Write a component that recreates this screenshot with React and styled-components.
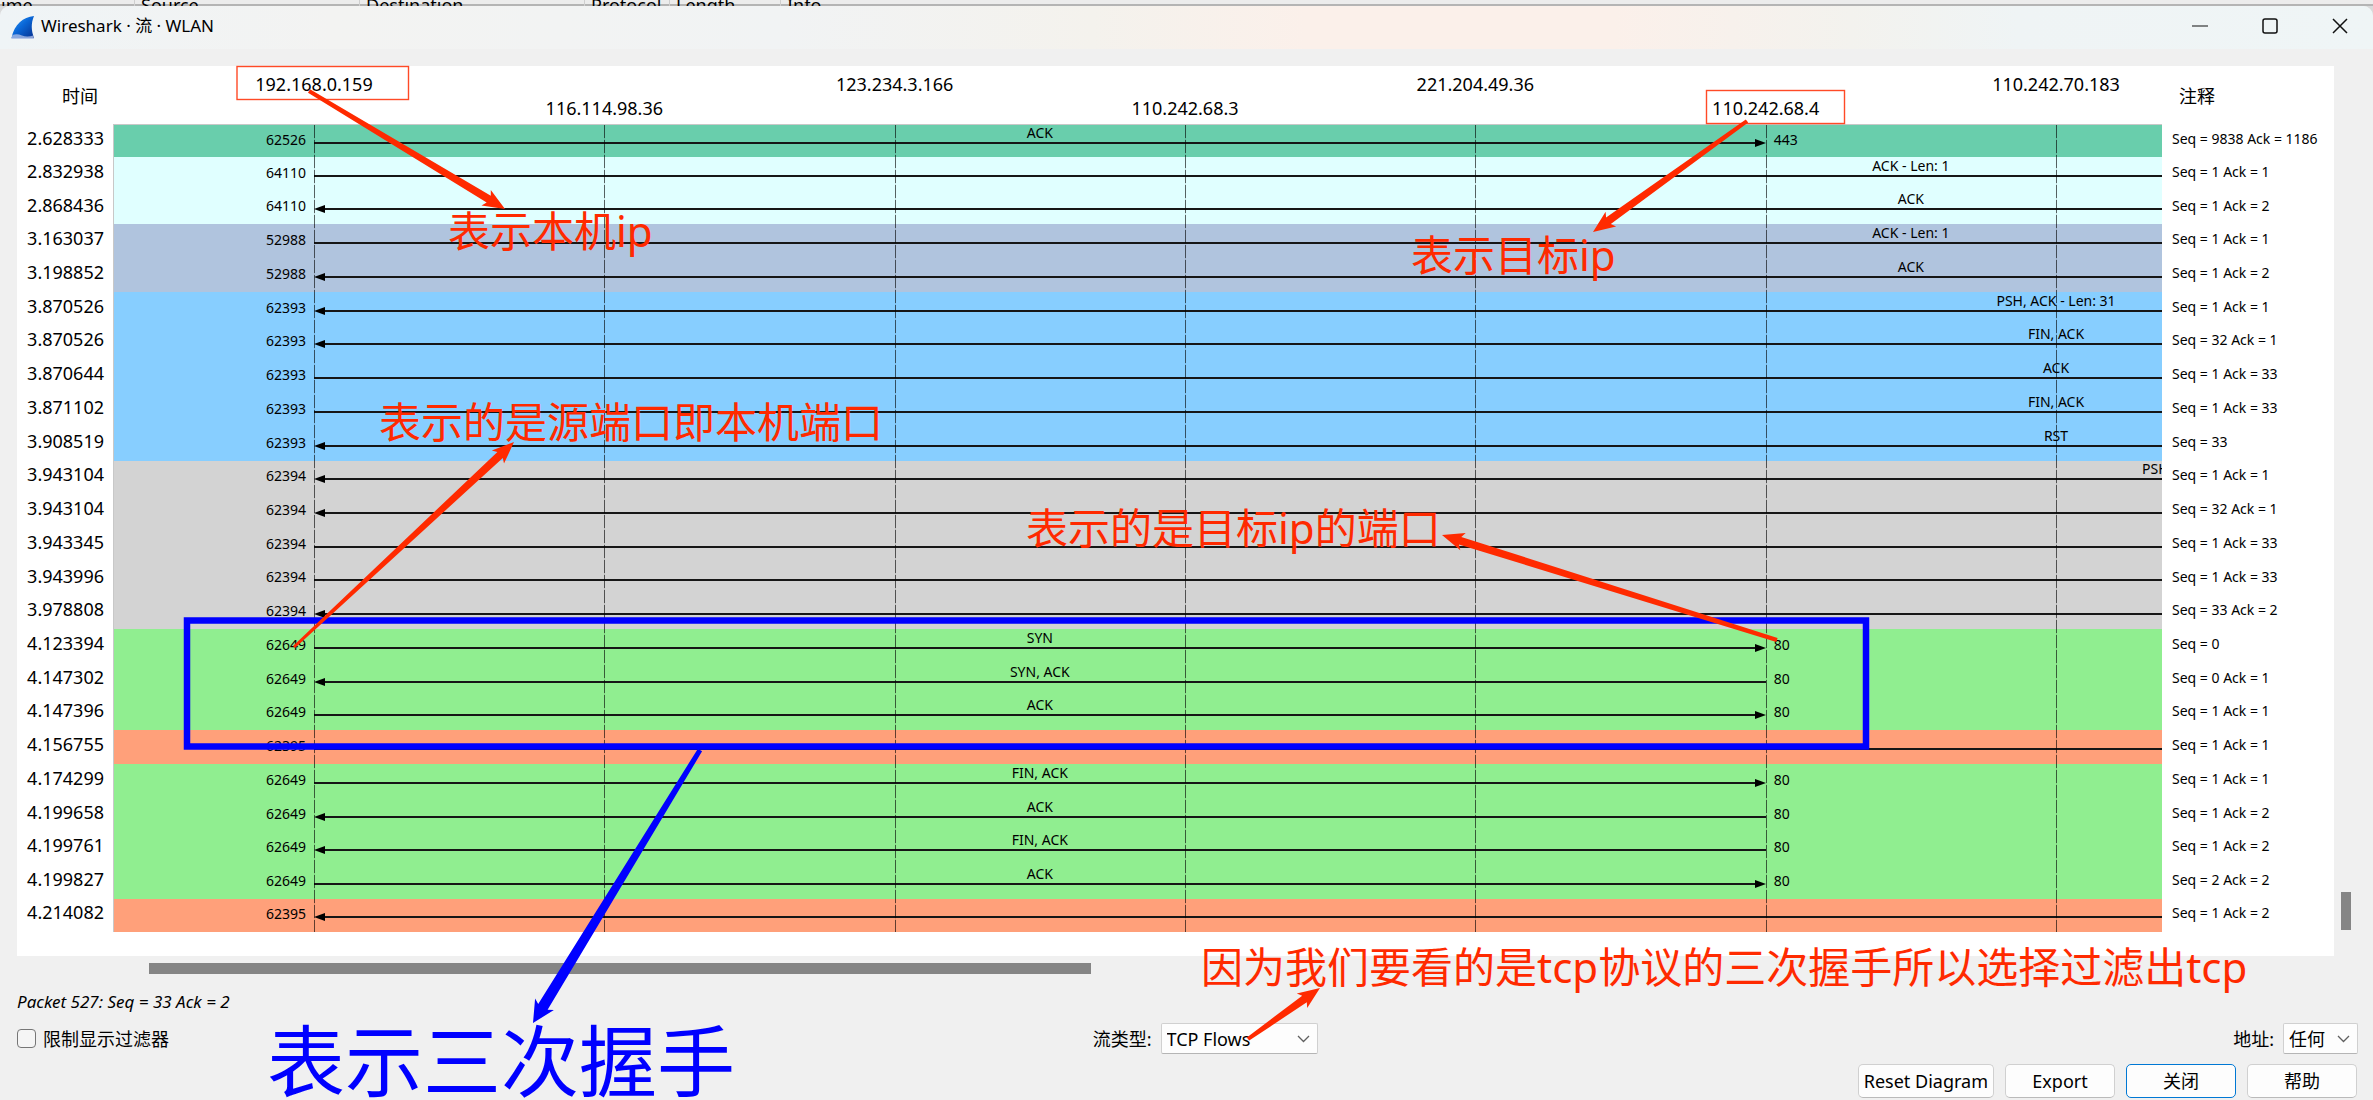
import React from "react";
import styled, { createGlobalStyle, css } from "styled-components";

const GlobalStyle = createGlobalStyle`
  *, *::before, *::after { box-sizing: border-box; }
  body { margin: 0; background: #f0f0f0; }
  body, button, select, input {
    font-family: "Noto Sans", "Noto Sans CJK SC", sans-serif;
    font-size: 18px;
    color: #000;
  }
`;

const RED = "#ff2a00";
const BLUE = "#0000ff";

/* Lifelines sit on the inner edges of this grid, shared by header, rows and overlay. */
const lifelineGrid = css`
  display: grid;
  grid-template-columns: 201px repeat(6, minmax(0, 1fr)) 106px;
`;
const panelGrid = css`
  display: grid;
  grid-template-columns: 96px minmax(0, 1fr) 172px;
`;

const Page = styled.div`
  position: relative;
  display: flex;
  flex-direction: column;
  min-height: 100vh;
  overflow: hidden;
  background: #d9dadb;
`;

const BackWindow = styled.div`
  display: grid;
  grid-template-columns: 134px 225px 225px 85px 111px 1fr;
  height: 6px;
  overflow: hidden;
  background: linear-gradient(#ececec 4px, #b4b4b4 4px);
`;
const BackColumn = styled.span`
  height: 6px;
  padding-left: ${(p) => (p.$first ? 1 : 6)}px;
  border-left: ${(p) => (p.$first ? "0" : "1px solid #cfcfcf")};
  line-height: 10px;
  overflow: hidden;
`;

const Dialog = styled.main`
  display: flex;
  flex: 1;
  flex-direction: column;
  padding-bottom: 2px;
  border-radius: 10px 10px 0 0;
  overflow: hidden;
  background: #f0f0f0;
`;

const TitleBar = styled.header`
  display: flex;
  align-items: center;
  height: 43px;
  padding: 0 17px 0 11px;
  background: linear-gradient(90deg, #eff4f6 0%, #f3f3f2 14%, #f1f3f4 33%, #f4f2ed 46%, #fbf0ea 55%, #fbf0ea 68%, #f3f2ee 78%, #eff4f5 85%, #eff5f6 100%);
`;
const Title = styled.h1`
  flex: 1;
  margin: 0 0 3px 7px;
  font-size: 17px;
  font-weight: 400;
  line-height: 24px;
`;
const WindowButtons = styled.div`
  display: flex;
  gap: 38px;
  margin-bottom: 3px;
`;
const WindowButton = styled.button`
  display: flex;
  align-items: center;
  justify-content: center;
  width: 32px;
  height: 32px;
  padding: 0;
  border: 0;
  background: none;
`;

const Workspace = styled.section`
  display: flex;
  flex: 1;
  padding: 17px 0 0 17px;
`;
const Panel = styled.div`
  position: relative;
  display: flex;
  flex: 1;
  flex-direction: column;
  padding-bottom: 24px;
  background: #fff;
`;
const Gutter = styled.div`
  display: flex;
  flex-direction: column;
  justify-content: flex-end;
  width: 39px;
  padding: 0 0 26px 7px;
`;
const VerticalThumb = styled.div`
  width: 10px;
  height: 38px;
  background: #858585;
`;
const HorizontalTrack = styled.div`
  display: grid;
  grid-template-columns: 132fr 942fr 1243fr;
  margin: 7px 39px 0 17px;
`;
const HorizontalThumb = styled.div`
  grid-column: 2;
  height: 11px;
  background: #858585;
`;

const FlowTable = styled.table`
  display: flex;
  flex: 1;
  flex-direction: column;
`;
const Head = styled.thead`
  display: block;
`;
const HeadRow = styled.tr`
  ${panelGrid}
  height: 59px;
`;
const HeadCell = styled.th`
  padding: 18px 15px 0 17px;
  font-weight: 400;
  line-height: 24px;
  text-align: ${(p) => p.$align};
`;
const HostScale = styled.th`
  ${lifelineGrid}
  padding: 6px 0 0;
  border-bottom: 1px solid #c8c8c8;
  font-weight: 400;
`;
const Host = styled.span`
  grid-row: 1;
  grid-column: ${(p) => p.$line + 2};
  display: flex;
  justify-content: center;
  width: 0;
  padding-top: ${(p) => (p.$line % 2 ? 24 : 0)}px;
  line-height: 24px;
  white-space: nowrap;
`;

const Body = styled.tbody`
  display: grid;
  flex: 1;
  grid-template-rows: 32px repeat(22, minmax(24px, 1fr)) 33px;
`;
const Row = styled.tr`
  ${panelGrid}
`;
const Time = styled.td`
  display: flex;
  align-items: center;
  justify-content: flex-end;
  padding: 0 9px 6px 0;
  line-height: 24px;
`;
const Comment = styled.td`
  display: flex;
  align-items: center;
  padding: 0 0 4px 10px;
  font-size: 14px;
  line-height: 20px;
  white-space: nowrap;
`;
const Lane = styled.td`
  ${lifelineGrid}
  align-items: end;
  padding: 0;
  box-shadow: inset 1px 0 #c8c8c8;
  background: ${(p) => p.$color};
  overflow: hidden;
  font-size: 14px;
  line-height: 16px;
`;
const Port = styled.span`
  grid-row: 1;
  grid-column: ${(p) => (p.$side === "source" ? 1 : 7)};
  padding: 0 8px 10px 8px;
  text-align: ${(p) => (p.$side === "source" ? "right" : "left")};
`;
const Arrow = styled.span`
  grid-row: 1;
  grid-column: 2 / ${(p) => (p.$open ? 9 : 7)};
  display: flex;
  align-items: center;
  height: 8px;
  margin-bottom: 11px;
`;
const Shaft = styled.span`
  flex: 1;
  height: 2px;
  background: #161616;
`;
const CenterLabel = styled.span`
  grid-row: 1;
  grid-column: 2 / 7;
  padding-bottom: 17px;
  text-align: center;
`;
const SpanLabel = styled.span`
  grid-row: 1;
  grid-column: 7 / 8;
  padding-bottom: 17px;
  text-align: center;
`;
const LineLabel = styled.span`
  grid-row: 1;
  grid-column: 8;
  display: flex;
  justify-content: center;
  width: 0;
  padding-bottom: 17px;
  white-space: nowrap;
`;
const EdgeLabel = styled.span`
  grid-row: 1;
  grid-column: 8;
  justify-self: end;
  width: 20px;
  padding-bottom: 17px;
  overflow: hidden;
`;
const labelParts = { center: CenterLabel, span: SpanLabel, line: LineLabel, edge: EdgeLabel };

const Lifelines = styled.div`
  ${lifelineGrid}
  position: absolute;
  inset: 59px 172px 24px 96px;
  pointer-events: none;
`;
const Lifeline = styled.span`
  grid-column: ${(p) => p.$line + 2};
  width: 1px;
  background: repeating-linear-gradient(rgba(0, 0, 0, 0.62) 0 13px, rgba(0, 0, 0, 0.12) 13px 15px);
`;

const Hint = styled.p`
  margin: 18px 17px 0;
  font-size: 17px;
  font-style: italic;
  line-height: 20px;
`;
const Options = styled.div`
  display: flex;
  align-items: center;
  justify-content: space-between;
  margin-top: 11px;
  padding: 0 15px 0 17px;
`;
const Field = styled.div`
  display: flex;
  align-items: center;
  gap: ${(p) => p.$gap}px;
  line-height: 24px;
`;
const FilterField = styled(Field)`
  padding-right: 8px;
`;
const CheckBox = styled.input`
  appearance: none;
  width: 19px;
  height: 19px;
  margin: 0;
  border: 1px solid #767676;
  border-radius: 4px;
  background: #f5f5f5;
`;
const SelectBox = styled.div`
  display: grid;
  align-items: center;
  width: ${(p) => p.$width}px;
  & > * { grid-area: 1 / 1; }
  & > svg { justify-self: end; margin-right: 8px; pointer-events: none; }
`;
const Select = styled.select`
  appearance: none;
  width: 100%;
  height: 31px;
  padding: 0 0 0 5px;
  border: 1px solid #d0d0d0;
  border-bottom-color: #b5b5b5;
  border-radius: 2px;
  background: #fdfdfd;
  line-height: 24px;
`;
const Actions = styled.div`
  display: flex;
  justify-content: flex-end;
  gap: 11px;
  margin-top: 10px;
  padding-right: 16px;
`;
const ActionButton = styled.button`
  min-width: 110px;
  height: 34px;
  padding: 0 5px 1px;
  border: 1px solid ${(p) => (p.$primary ? "#0078d4" : "#d0d0d0")};
  border-bottom-color: ${(p) => (p.$primary ? "#0078d4" : "#bababa")};
  border-radius: 5px;
  background: #fdfdfd;
  line-height: 24px;
`;

const Markup = styled.div`
  position: absolute;
  inset: 0;
  overflow: hidden;
  pointer-events: none;
`;
const MarkupDrawing = styled.svg`
  position: absolute;
  left: 0;
  top: 0;
`;
const Note = styled.span`
  position: absolute;
  left: ${(p) => p.$x}px;
  top: ${(p) => p.$y}px;
  color: ${(p) => (p.$large ? BLUE : RED)};
  font-size: ${(p) => (p.$large ? 78 : 42)}px;
  line-height: ${(p) => (p.$large ? 78 : 42)}px;
  white-space: nowrap;
`;

const C = {
  teal: "#69ceac",
  cyan: "#e0ffff",
  steel: "#b0c4de",
  sky: "#87ceff",
  gray: "#d3d3d3",
  green: "#90ee90",
  salmon: "#ffa07a",
};

const hosts = [
  "192.168.0.159",
  "116.114.98.36",
  "123.234.3.166",
  "110.242.68.3",
  "221.204.49.36",
  "110.242.68.4",
  "110.242.70.183",
];

/* time, colour, source port, direction, label, label place, target port, comment */
const packets = [
  ["2.628333", C.teal, "62526", "right", "ACK", "center", "443", "Seq = 9838 Ack = 1186"],
  ["2.832938", C.cyan, "64110", "right", "ACK - Len: 1", "span", null, "Seq = 1 Ack = 1"],
  ["2.868436", C.cyan, "64110", "left", "ACK", "span", null, "Seq = 1 Ack = 2"],
  ["3.163037", C.steel, "52988", "right", "ACK - Len: 1", "span", null, "Seq = 1 Ack = 1"],
  ["3.198852", C.steel, "52988", "left", "ACK", "span", null, "Seq = 1 Ack = 2"],
  ["3.870526", C.sky, "62393", "left", "PSH, ACK - Len: 31", "line", null, "Seq = 1 Ack = 1"],
  ["3.870526", C.sky, "62393", "left", "FIN, ACK", "line", null, "Seq = 32 Ack = 1"],
  ["3.870644", C.sky, "62393", "right", "ACK", "line", null, "Seq = 1 Ack = 33"],
  ["3.871102", C.sky, "62393", "right", "FIN, ACK", "line", null, "Seq = 1 Ack = 33"],
  ["3.908519", C.sky, "62393", "left", "RST", "line", null, "Seq = 33"],
  ["3.943104", C.gray, "62394", "left", "PSH", "edge", null, "Seq = 1 Ack = 1"],
  ["3.943104", C.gray, "62394", "left", null, null, null, "Seq = 32 Ack = 1"],
  ["3.943345", C.gray, "62394", "right", null, null, null, "Seq = 1 Ack = 33"],
  ["3.943996", C.gray, "62394", "right", null, null, null, "Seq = 1 Ack = 33"],
  ["3.978808", C.gray, "62394", "left", null, null, null, "Seq = 33 Ack = 2"],
  ["4.123394", C.green, "62649", "right", "SYN", "center", "80", "Seq = 0"],
  ["4.147302", C.green, "62649", "left", "SYN, ACK", "center", "80", "Seq = 0 Ack = 1"],
  ["4.147396", C.green, "62649", "right", "ACK", "center", "80", "Seq = 1 Ack = 1"],
  ["4.156755", C.salmon, "62395", "right", null, null, null, "Seq = 1 Ack = 1"],
  ["4.174299", C.green, "62649", "right", "FIN, ACK", "center", "80", "Seq = 1 Ack = 1"],
  ["4.199658", C.green, "62649", "left", "ACK", "center", "80", "Seq = 1 Ack = 2"],
  ["4.199761", C.green, "62649", "left", "FIN, ACK", "center", "80", "Seq = 1 Ack = 2"],
  ["4.199827", C.green, "62649", "right", "ACK", "center", "80", "Seq = 2 Ack = 2"],
  ["4.214082", C.salmon, "62395", "left", null, null, null, "Seq = 1 Ack = 2"],
];

function Packet({ data }) {
  const [time, color, source, direction, label, place, target, comment] = data;
  const Label = labelParts[place];
  return (
    <Row>
      <Time>{time}</Time>
      <Lane $color={color}>
        <Port $side="source">{source}</Port>
        <Arrow $open={!target}>
          {direction === "left" && (
            <svg width="11" height="8" viewBox="0 0 11 8"><path d="M0 4 11 0V8Z" /></svg>
          )}
          <Shaft />
          {direction === "right" && target && (
            <svg width="11" height="8" viewBox="0 0 11 8"><path d="M11 4 0 0V8Z" /></svg>
          )}
        </Arrow>
        {label && <Label>{label}</Label>}
        {target && <Port $side="target">{target}</Port>}
      </Lane>
      <Comment>{comment}</Comment>
    </Row>
  );
}

/* A hand-drawn style pointer: thin at the tail, widening into a notched head. */
function Pointer({ from, to, color, tail = 2, shaft = 4, wing = 9 }) {
  const [x1, y1] = from;
  const [x2, y2] = to;
  const length = Math.hypot(x2 - x1, y2 - y1);
  const ux = (x2 - x1) / length;
  const uy = (y2 - y1) / length;
  const at = (along, side) =>
    `${(x1 + ux * along - uy * side).toFixed(1)},${(y1 + uy * along + ux * side).toFixed(1)}`;
  const points = [
    at(0, -tail),
    at(length - 19, -shaft),
    at(length - 22, -wing),
    at(length, 0),
    at(length - 22, wing),
    at(length - 19, shaft),
    at(0, tail),
  ];
  return <polygon points={points.join(" ")} fill={color} />;
}

function Chevron() {
  return (
    <svg width="13" height="8" viewBox="0 0 13 8" fill="none" stroke="#606060" strokeWidth="1.3">
      <path d="M1 1 6.5 6.5 12 1" />
    </svg>
  );
}

export default function App() {
  return (
    <Page>
      <GlobalStyle />
      <BackWindow>
        <BackColumn $first>ime</BackColumn>
        <BackColumn>Source</BackColumn>
        <BackColumn>Destination</BackColumn>
        <BackColumn>Protocol</BackColumn>
        <BackColumn>Length</BackColumn>
        <BackColumn>Info</BackColumn>
      </BackWindow>

      <Dialog>
        <TitleBar>
          <svg width="23" height="23" viewBox="0 0 23 23">
            <defs>
              <linearGradient id="fin" x1="0" y1="0" x2="1" y2="1">
                <stop offset="0" stopColor="#3aa0f5" />
                <stop offset="0.45" stopColor="#0a68d8" />
                <stop offset="1" stopColor="#06308f" />
              </linearGradient>
            </defs>
            <path d="M23 0C12 1 3.500 8 0.500 22H23C20 14 20 7 23 0Z" fill="url(#fin)" />
            <path d="M1.500 19Q6 17.500 11 19.500T22.200 19.500L23 23H0.200Z" fill="#a9bce6" opacity="0.8" />
          </svg>
          <Title>Wireshark · 流 · WLAN</Title>
          <WindowButtons>
            <WindowButton aria-label="Minimize">
              <svg width="16" height="16" stroke="#111" strokeWidth="1.2"><path d="M0 8H16" /></svg>
            </WindowButton>
            <WindowButton aria-label="Maximize">
              <svg width="16" height="16" fill="none" stroke="#111" strokeWidth="1.5">
                <rect x="1" y="1" width="14" height="14" rx="2" />
              </svg>
            </WindowButton>
            <WindowButton aria-label="Close">
              <svg width="16" height="16" stroke="#111" strokeWidth="1.5"><path d="M1 1 15 15M15 1 1 15" /></svg>
            </WindowButton>
          </WindowButtons>
        </TitleBar>

        <Workspace>
          <Panel>
            <FlowTable>
              <Head>
                <HeadRow>
                  <HeadCell $align="right">时间</HeadCell>
                  <HostScale>
                    {hosts.map((host, i) => (
                      <Host key={host} $line={i}>{host}</Host>
                    ))}
                  </HostScale>
                  <HeadCell $align="left">注释</HeadCell>
                </HeadRow>
              </Head>
              <Body>
                {packets.map((packet, i) => (
                  <Packet key={i} data={packet} />
                ))}
              </Body>
            </FlowTable>
            <Lifelines>
              {hosts.map((host, i) => (
                <Lifeline key={host} $line={i} />
              ))}
            </Lifelines>
          </Panel>
          <Gutter>
            <VerticalThumb />
          </Gutter>
        </Workspace>
        <HorizontalTrack>
          <HorizontalThumb />
        </HorizontalTrack>

        <Hint>Packet 527: Seq = 33 Ack = 2</Hint>
        <Options>
          <FilterField $gap={7}>
            <CheckBox type="checkbox" id="limit" />
            <label htmlFor="limit">限制显示过滤器</label>
          </FilterField>
          <Field $gap={9}>
            <label htmlFor="flow-type">流类型:</label>
            <SelectBox $width={157}>
              <Select id="flow-type" defaultValue="tcp">
                <option value="tcp">TCP Flows</option>
              </Select>
              <Chevron />
            </SelectBox>
          </Field>
          <Field $gap={9}>
            <label htmlFor="address">地址:</label>
            <SelectBox $width={75}>
              <Select id="address" defaultValue="any">
                <option value="any">任何</option>
              </Select>
              <Chevron />
            </SelectBox>
          </Field>
        </Options>
        <Actions>
          <ActionButton>Reset Diagram</ActionButton>
          <ActionButton>Export</ActionButton>
          <ActionButton $primary>关闭</ActionButton>
          <ActionButton>帮助</ActionButton>
        </Actions>
      </Dialog>

      <Markup>
        <Note $x={448} $y={210}>表示本机ip</Note>
        <Note $x={1411} $y={234}>表示目标ip</Note>
        <Note $x={379} $y={401}>表示的是源端口即本机端口</Note>
        <Note $x={1026} $y={507}>表示的是目标ip的端口</Note>
        <Note $x={1201} $y={946}>因为我们要看的是tcp协议的三次握手所以选择过滤出tcp</Note>
        <Note $x={267} $y={1022} $large>表示三次握手</Note>
        <MarkupDrawing width="2373" height="1100" viewBox="0 0 2373 1100">
          <g fill="none" stroke={RED} strokeWidth="1.4" opacity="0.85">
            <rect x="237" y="66.500" width="171.500" height="33" />
            <rect x="1706.500" y="90.500" width="138" height="33" />
          </g>
          <rect x="187" y="620.500" width="1679" height="126" fill="none" stroke={BLUE} strokeWidth="6.500" />
          <Pointer from={[309, 91]} to={[505, 209]} color={RED} />
          <Pointer from={[1747, 121]} to={[1593, 232]} color={RED} />
          <Pointer from={[294, 647]} to={[514, 442]} color={RED} tail={1.5} />
          <Pointer from={[1777, 640]} to={[1442, 535]} color={RED} />
          <Pointer from={[1248, 1039]} to={[1320, 988]} color={RED} />
          <Pointer from={[700, 750]} to={[533, 1023]} color={BLUE} tail={2.5} shaft={5.5} wing={11} />
        </MarkupDrawing>
      </Markup>
    </Page>
  );
}
